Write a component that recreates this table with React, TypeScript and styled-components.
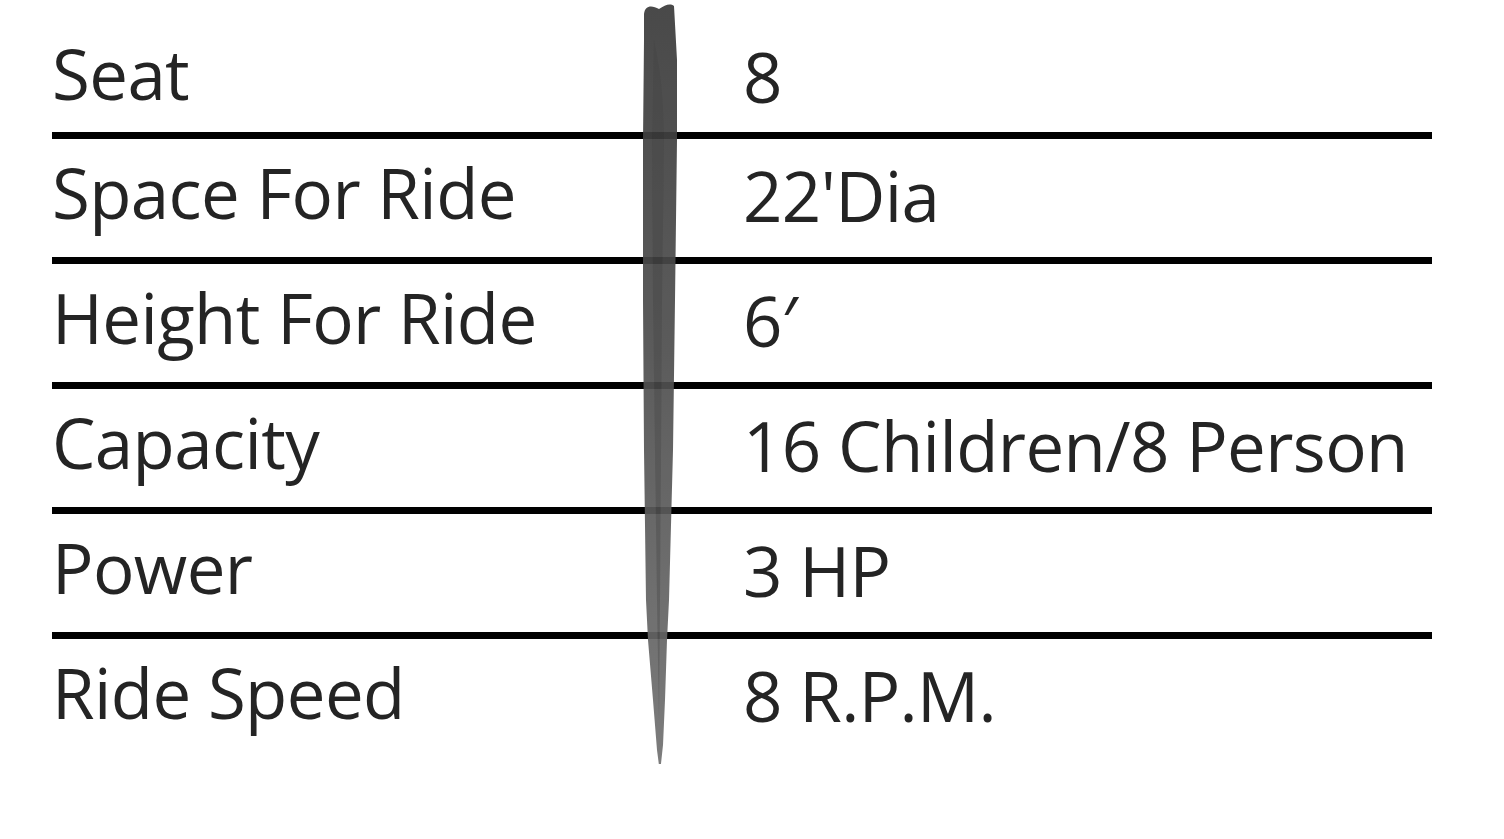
import styled, { createGlobalStyle } from 'styled-components';

const GlobalStyle = createGlobalStyle`
  html, body {
    margin: 0;
    padding: 0;
    background: #ffffff;
  }
  body {
    font-family: "Open Sans", "Noto Sans", "Liberation Sans", sans-serif;
    color: #242424;
  }
`;

const Sheet = styled.div`
  position: relative;
  width: 1380px;
  padding: 14px 0 0 52px;
`;

const Row = styled.div`
  display: grid;
  grid-template-columns: 691px 1fr;
  height: 125px;
  box-sizing: border-box;
  padding-top: 19px;
  border-bottom: 7px solid #000;

  &:first-of-type {
    padding-top: 25px;
  }

  &:last-of-type {
    border-bottom: none;
  }
`;

const Cell = styled.div<{ $shift?: number }>`
  font-size: 69px;
  line-height: 1;
  letter-spacing: -0.6px;
  white-space: nowrap;
  padding-top: ${(p) => p.$shift ?? 0}px;
`;

const Divider = styled.svg`
  position: absolute;
  left: 640px;
  top: 0;
  width: 42px;
  height: 780px;
  opacity: 0.92;
`;

const specs = [
  { label: 'Seat', value: '8' },
  { label: 'Space For Ride', value: "22'Dia" },
  { label: 'Height For Ride', value: '6′' },
  { label: 'Capacity', value: '16 Children/8 Person' },
  { label: 'Power', value: '3 HP' },
  { label: 'Ride Speed', value: '8 R.P.M.' },
];

const App = () => {
  return (
    <>
      <GlobalStyle />
      <Sheet>
        {specs.map((s) => (
          <Row key={s.label}>
            <Cell>{s.label}</Cell>
            <Cell $shift={3}>{s.value}</Cell>
          </Row>
        ))}
        <Divider viewBox="0 0 42 780">
          <defs>
            <linearGradient id="stroke" x1="0" y1="0" x2="0" y2="1">
              <stop offset="0" stopColor="#3a3a3a" />
              <stop offset="0.45" stopColor="#4e4e4e" />
              <stop offset="1" stopColor="#727272" />
            </linearGradient>
          </defs>
          <path
            d="M4 14 C5 5, 12 5, 19 9 C25 5, 30 3, 34 6 L37 60 L37 140 L35 300 L33 450 L29 600 L27 640 L25 700 L23 745 L20 773 L17 750 L13 700 L8 640 L6 600 L4 450 L3 300 L3 140 L4 40 Z"
            fill="url(#stroke)"
          />
          <path
            d="M14 40 C18 60, 24 90, 24 140 L22 300 L21 450 L20 600 L19 720 L17 600 L15 450 L13 300 L12 140 Z"
            fill="#333"
            opacity="0.35"
          />
        </Divider>
      </Sheet>
    </>
  );
};

export default App;
